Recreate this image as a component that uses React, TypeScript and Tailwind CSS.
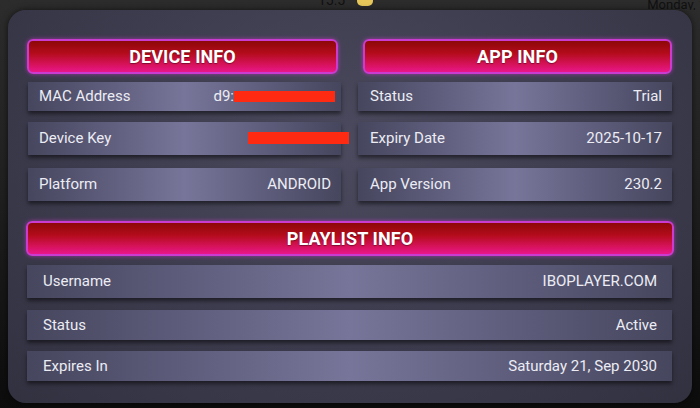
import React from "react";

const rowBg =
  "bg-[linear-gradient(90deg,#46465e_0%,#5e5d7c_25%,#77769a_50%,#5e5d7c_75%,#46465e_100%)]";
const rowShadow = "shadow-[0_3px_4px_rgba(0,0,0,0.5)]";

function Header({ title, className = "" }: { title: string; className?: string }) {
  return (
    <div
      className={`h-[35px] rounded-[6px] border-2 border-[#c93ccf] bg-[linear-gradient(180deg,#8d0808_0%,#b40c1c_40%,#d6125a_75%,#e8178a_100%)] shadow-[0_0_4px_rgba(220,60,220,0.6)] flex items-center justify-center ${className}`}
    >
      <span className="text-white font-bold text-[18px] tracking-[0.1px] [text-shadow:0_1px_1px_rgba(0,0,0,0.4)]">
        {title}
      </span>
    </div>
  );
}

function Row({
  label,
  value,
  className = "",
  pad = "pl-[11px] pr-[10px]",
}: {
  label: string;
  value: React.ReactNode;
  className?: string;
  pad?: string;
}) {
  return (
    <div
      className={`${rowBg} ${rowShadow} ${pad} flex items-center justify-between text-[15px] text-[#ececf4] ${className}`}
    >
      <span>{label}</span>
      <span className="flex items-center">{value}</span>
    </div>
  );
}

export default function App() {
  return (
    <div
      className="w-[700px] h-[408px] overflow-hidden bg-[linear-gradient(180deg,#2c2c2c_0%,#222_40%,#0c0c0c_100%)] flex flex-col"
      style={{ fontFamily: "Roboto, 'Noto Sans', sans-serif" }}
    >
      <div className="h-[10px] overflow-hidden flex text-[#111] text-[14px] leading-none">
        <span className="ml-[318px] -mt-[7px]">15:5</span>
        <span className="ml-[12px] -mt-[4px] w-[16px] h-[10px] rounded-full bg-[#e6c85a]" />
        <span className="ml-auto mr-[-6px] -mt-[2px] text-[13px]">Monday, 1</span>
      </div>
      <div className="ml-[8px] mr-[8px] h-[393px] rounded-[18px] bg-[radial-gradient(ellipse_at_50%_35%,#4b4a5e_0%,#3d3c4e_55%,#323140_100%)] shadow-[0_0_6px_rgba(0,0,0,0.6)] pl-[19px] pr-[20px] pt-[29px] flex flex-col">
        <div className="grid grid-cols-2 gap-x-[17px]">
          <div className="flex flex-col">
            <Header title="DEVICE INFO" className="mr-[3px]" />
            <Row
              className="mt-[8px] h-[29px] ml-[1px]"
              label="MAC Address"
              value={
                <>
                  <span>d9:</span>
                  <span className="inline-block w-[101px] h-[11px] bg-[#ff2a12] -mr-[4px]" />
                </>
              }
            />
            <Row
              className="mt-[11px] h-[33px] ml-[1px]"
              label="Device Key"
              value={<span className="inline-block w-[101px] h-[12px] bg-[#ff2a12] -mr-[18px] mt-[-1px]" />}
            />
            <Row className="mt-[13px] h-[33px] ml-[1px]" label="Platform" value="ANDROID" />
          </div>
          <div className="flex flex-col">
            <Header title="APP INFO" className="ml-[5px]" />
            <Row className="mt-[8px] h-[29px]" pad="pl-[12px] pr-[10px]" label="Status" value="Trial" />
            <Row className="mt-[11px] h-[33px]" pad="pl-[12px] pr-[10px]" label="Expiry Date" value="2025-10-17" />
            <Row className="mt-[13px] h-[33px]" pad="pl-[12px] pr-[10px]" label="App Version" value="230.2" />
          </div>
        </div>
        <Header title="PLAYLIST INFO" className="mt-[20px] -ml-[1px] -mr-[2px]" />
        <Row
          className="mt-[9px] h-[33px]"
          pad="pl-[16px] pr-[15px]"
          label="Username"
          value="IBOPLAYER.COM"
        />
        <Row className="mt-[12px] h-[30px]" pad="pl-[16px] pr-[15px]" label="Status" value="Active" />
        <Row
          className="mt-[11px] h-[30px]"
          pad="pl-[16px] pr-[15px]"
          label="Expires In"
          value="Saturday 21, Sep 2030"
        />
      </div>
    </div>
  );
}
